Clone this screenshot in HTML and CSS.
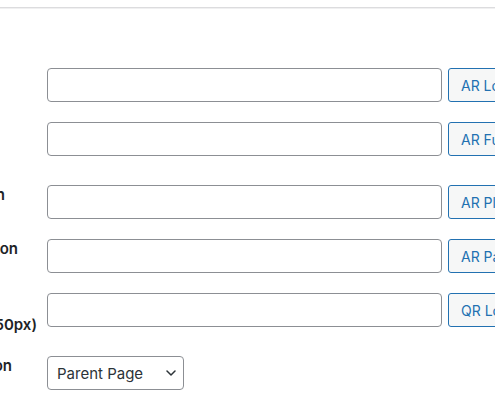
FILE: index.html
```html
<!DOCTYPE html>
<html lang="en">
<head>
<meta charset="utf-8">
<title>Settings</title>
<link rel="stylesheet" href="styles.css">
</head>
<body>
<div class="topline"></div>
<div class="form-table">
  <div class="row">
    <div class="th"><div class="label end-none">AR Logo</div></div>
    <div class="td">
      <input class="text-input" type="text">
      <button class="btn" type="button">AR Logo Upload</button>
    </div>
  </div>
  <div class="row">
    <div class="th"><div class="label end-none">AR Fullscreen<br>Icon</div></div>
    <div class="td">
      <input class="text-input" type="text">
      <button class="btn" type="button">AR Fullscreen Upload</button>
    </div>
  </div>
  <div class="row">
    <div class="th"><div class="label end-5">AR Play Button</div></div>
    <div class="td">
      <input class="text-input" type="text">
      <button class="btn" type="button">AR Play Upload</button>
    </div>
  </div>
  <div class="row">
    <div class="th"><div class="label end-18">AR Pause Button</div></div>
    <div class="td">
      <input class="text-input" type="text">
      <button class="btn" type="button">AR Pause Upload</button>
    </div>
  </div>
  <div class="row">
    <div class="th"><div class="label end-37">QR Code Logo<br>Image Size (150x150px)</div></div>
    <div class="td">
      <input class="text-input" type="text">
      <button class="btn" type="button">QR Logo Upload</button>
    </div>
  </div>
  <div class="row">
    <div class="th"><div class="label end-12">QR Code Location</div></div>
    <div class="td">
      <div class="select-wrap">
        <select class="select">
          <option>Parent Page</option>
          <option>Child Page</option>
        </select>
        <svg class="chevron" width="10" height="6" viewBox="0 0 10 6" aria-hidden="true">
          <path d="M1 1 L5 5 L9 1" fill="none" stroke="#2c3338" stroke-width="1.5" stroke-linecap="round" stroke-linejoin="round"/>
        </svg>
      </div>
    </div>
  </div>
</div>
</body>
</html>
```

FILE: styles.css
```css
html, body {
  margin: 0;
  padding: 0;
  overflow: hidden;
  background: #ffffff;
}

body {
  font-family: Inter, "Liberation Sans", Arial, sans-serif;
  color: #1d2327;
  font-size: 15px;
}

.topline {
  margin-top: 7px;
  height: 0;
  border-top: 1px solid #dcdcde;
  box-shadow: 0 1px 0 #f0f0f1;
}

.form-table {
  padding-top: 50px;
  display: flex;
  flex-direction: column;
}

.row {
  display: flex;
  align-items: flex-start;
}

.th {
  flex: none;
  width: 47px;
  overflow: hidden;
  display: flex;
  justify-content: flex-end;
  padding: 9px 0 10px;
  line-height: 22px;
  font-weight: 600;
}

.label {
  flex: none;
  white-space: nowrap;
}

.end-none { margin-right: 60px; }
.end-5 { margin-right: 42px; }
.end-12 { margin-right: 35px; }
.end-18 { margin-right: 29px; }
.end-37 { margin-right: 10px; }

.td {
  flex: none;
  display: flex;
  gap: 6px;
  padding: 10px 0;
}

.text-input {
  box-sizing: border-box;
  width: 395px;
  height: 34px;
  margin: 0;
  border: 1px solid #8c8f94;
  border-radius: 4px;
  background: #fff;
  padding: 0 8px;
  font: inherit;
  color: #2c3338;
}

.btn {
  flex: none;
  box-sizing: border-box;
  height: 34px;
  margin: 0;
  padding: 0 12px;
  border: 1px solid #2271b1;
  border-radius: 3px;
  background: #f6f7f7;
  color: #2271b1;
  font-family: inherit;
  font-size: 14px;
  white-space: nowrap;
  cursor: pointer;
}

.select-wrap {
  position: relative;
  width: 137px;
  height: 34px;
}

.select {
  appearance: none;
  -webkit-appearance: none;
  box-sizing: border-box;
  width: 137px;
  height: 34px;
  margin: 0;
  padding: 0 24px 0 9px;
  border: 1px solid #8c8f94;
  border-radius: 4px;
  background: #fff;
  color: #2c3338;
  font-family: inherit;
  font-size: 15px;
}

.chevron {
  position: absolute;
  right: 8px;
  top: 14px;
  pointer-events: none;
}
```
